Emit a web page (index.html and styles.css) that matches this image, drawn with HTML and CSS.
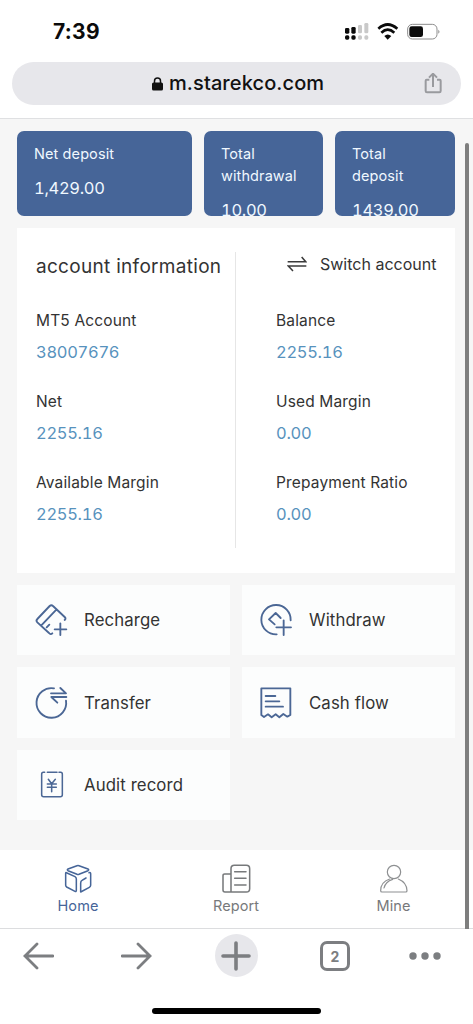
FILE: index.html
```html
<!DOCTYPE html>
<html lang="en">
<head>
<meta charset="utf-8">
<meta name="viewport" content="width=device-width, initial-scale=1">
<title>Account</title>
<link rel="stylesheet" href="styles.css">
</head>
<body>
<div class="screen">
  <header class="chrome-top">
    <div class="status">
      <span class="time">7:39</span>
      <svg class="status-icons" width="98" height="20" viewBox="0 0 294 60">
        <g fill="#0b0b0b">
          <rect x="6" y="24" width="13" height="17" rx="4"/><rect x="25" y="21" width="13" height="20" rx="4"/>
          <rect x="6" y="46" width="13" height="13" rx="5"/><rect x="25" y="46" width="13" height="13" rx="5"/>
        </g>
        <g fill="#c9c9c9">
          <rect x="45" y="15" width="12" height="25" rx="4"/><rect x="64" y="9" width="12" height="31" rx="4"/>
          <rect x="45" y="46" width="12" height="13" rx="5"/><rect x="64" y="46" width="12" height="13" rx="5"/>
        </g>
        <g fill="none" stroke="#0b0b0b" stroke-width="8">
          <path d="M106 26Q134 1 163 26"/><path d="M115 38Q134 20 154 38"/>
        </g>
        <path d="M124 48Q134 39 145 48L134 59Z" fill="#0b0b0b"/>
        <rect x="194" y="13" width="88" height="44" rx="14" fill="#fff" stroke="#8d8d8d" stroke-width="3"/>
        <rect x="199" y="19" width="41" height="32" rx="7" fill="#0b0b0b"/>
        <path d="M286 29Q293 35 286 41Z" fill="#8d8d8d"/>
      </svg>
    </div>
    <div class="address">
      <svg class="lock" width="11" height="14" viewBox="0 0 11 14"><rect x="0" y="5.4" width="11" height="8.1" rx="1.6"/><path d="M2.5 6.5V4a3 3 0 0 1 6 0v2.5" fill="none" stroke="#111" stroke-width="1.5"/></svg>
      <span class="url">m.starekco.com</span>
      <svg class="share" width="18" height="22" viewBox="0 0 54 66"><g fill="none" stroke="#999a9e" stroke-width="6" stroke-linejoin="round"><path d="M16 20H8Q5 20 5 23V54Q5 58 9 58H46Q50 58 50 54V23Q50 20 47 20H39M27 42V3M15 14L27 2L39 14"/></g></svg>
    </div>
  </header>

  <main class="content">
    <section class="totals">
      <div class="total"><p class="total-label">Net deposit</p><p class="total-value">1,429.00</p></div>
      <div class="total"><p class="total-label">Total withdrawal</p><p class="total-value">10.00</p></div>
      <div class="total"><p class="total-label">Total deposit</p><p class="total-value">1439.00</p></div>
    </section>

    <section class="account">
      <div class="account-col">
        <h1 class="account-title">account information</h1>
        <dl class="facts">
          <dt>MT5 Account</dt><dd>38007676</dd>
          <dt>Net</dt><dd>2255.16</dd>
          <dt>Available Margin</dt><dd>2255.16</dd>
        </dl>
      </div>
      <div class="account-col account-right">
        <div class="switch">
          <svg width="20" height="18" viewBox="0 0 60 54"><path d="M2 20H56L44 6M58 33H4L18 48" fill="none" stroke="#3b3b3b" stroke-width="4.5"/></svg>
          <span>Switch account</span>
        </div>
        <dl class="facts">
          <dt>Balance</dt><dd>2255.16</dd>
          <dt>Used Margin</dt><dd>0.00</dd>
          <dt>Prepayment Ratio</dt><dd>0.00</dd>
        </dl>
      </div>
    </section>

    <nav class="actions">
      <div class="action">
        <svg class="action-icon" viewBox="0 0 102 102"><path d="M55 91Q50 96 45 90L10 58Q5 53 10 48L47 9Q52 4 57 9L92 42Q97 47 92 51M67 20L22 67M38 73L46 65M79 61V96M62 79H97"/></svg>
        <span>Recharge</span>
      </div>
      <div class="action">
        <svg class="action-icon" viewBox="0 0 102 102"><path d="M95 52A44 44 0 1 0 53 94M47 64L30 49L50 30L65 45M74 52V96M52 73H96"/></svg>
        <span>Withdraw</span>
      </div>
      <div class="action">
        <svg class="action-icon" viewBox="0 0 102 102"><path d="M60 7A44.5 44.5 0 1 0 96 44M51 22H96L79 6M97 33H52L70 50"/></svg>
        <span>Transfer</span>
      </div>
      <div class="action">
        <svg class="action-icon" viewBox="0 0 102 102"><path d="M7 7H94V87L85 92L73 84L61 94L50 85L38 94L27 85L15 93L7 87ZM20 30H49M20 46H61M20 62H72"/></svg>
        <span>Cash flow</span>
      </div>
      <div class="action">
        <svg class="action-icon thin" viewBox="0 0 102 102"><path d="M32 13H28Q23 13 23 19V80Q23 86 29 86H79Q85 86 85 80V19Q85 13 80 13H75M40 13H69M43 34L53 47L64 34M53 47V71M40 48H67M40 58H67"/></svg>
        <span>Audit record</span>
      </div>
    </nav>
  </main>

  <nav class="tabs">
    <div class="tab tab-on">
      <svg class="tab-icon" viewBox="0 0 90 90"><path d="M42 5Q45 4 48 5L75 15Q79 17 75 20L48 31Q45 32 42 31L15 20Q11 17 15 15ZM8 28Q8 24 12 27L36 38Q40 40 40 45V79Q40 84 36 82L11 69Q8 67 8 64ZM53 84L79 70Q83 68 83 64V29Q83 24 78 26M53 84V58Q53 51 57 49L69 42"/></svg>
      <span>Home</span>
    </div>
    <div class="tab">
      <svg class="tab-icon" viewBox="0 0 90 90"><path d="M30 30H11Q6 30 6 35V78Q6 84 12 84H76Q86 84 86 74V14Q86 4 76 4H40Q30 4 30 14V84M41 23H75M41 43H75M41 63H75"/></svg>
      <span>Report</span>
    </div>
    <div class="tab">
      <svg class="tab-icon light" viewBox="0 0 90 90"><circle cx="45" cy="24" r="20"/><path d="M32 45Q5 54 5 80Q5 84 9 84H80Q84 84 84 80Q83 55 58 45M15 72Q19 53 41 46"/></svg>
      <span>Mine</span>
    </div>
  </nav>
  <div class="scrollbar"></div>

  <footer class="chrome-bottom">
    <div class="tools">
      <div class="tool"><svg width="32" height="28" viewBox="0 0 32 28"><path d="M31 14H3M15 2L3 14L15 26"/></svg></div>
      <div class="tool"><svg width="32" height="28" viewBox="0 0 32 28"><path d="M1 14H29M17 2L29 14L17 26"/></svg></div>
      <div class="tool"><div class="new-tab"><svg width="30" height="30" viewBox="0 0 30 30"><path d="M2 15H28M15 2V28" stroke-width="3.6"/></svg></div></div>
      <div class="tool"><div class="tab-count">2</div></div>
      <div class="tool"><svg class="dots" width="32" height="8" viewBox="0 0 32 8"><circle cx="4" cy="4" r="3.7"/><circle cx="16" cy="4" r="3.7"/><circle cx="28" cy="4" r="3.7"/></svg></div>
    </div>
    <div class="home-bar"></div>
  </footer>
</div>
</body>
</html>
```

FILE: styles.css
```css
* { box-sizing: border-box; margin: 0; padding: 0; }

body {
  background: #fff;
  color: #333;
  font-family: Inter, "Liberation Sans", sans-serif;
}

svg { display: block; flex: none; }

.screen {
  position: relative;
  display: flex;
  flex-direction: column;
  width: 473px;
  height: 1024px;
  overflow: hidden;
}

/* Browser header */
.chrome-top {
  height: 119px;
  border-bottom: 1px solid #dfe0e2;
  padding: 20px 12px 0;
}

.status {
  display: flex;
  justify-content: space-between;
  height: 42px;
  padding: 0 20px 0 41px;
}

.time {
  color: #0b0b0b;
  font-size: 21px;
  font-weight: 700;
  line-height: 24px;
  letter-spacing: 0.3px;
}

.address {
  display: flex;
  align-items: center;
  height: 43px;
  padding: 0 19px 0 140px;
  border-radius: 22px;
  background: #e7e7eb;
  color: #111;
}

.lock { fill: #111; }

.url {
  flex: 1;
  padding-left: 6px;
  font-size: 20px;
  font-weight: 500;
  letter-spacing: 0.1px;
  line-height: 24px;
  margin-top: -2px;
  white-space: nowrap;
}

/* Page */
.content {
  flex: 1;
  padding: 12px 18px 0 17px;
  background: #f6f6f6;
}

.totals {
  display: grid;
  grid-template-columns: 175px 119px 120px;
  column-gap: 12px;
  height: 85px;
}

.total {
  overflow: hidden;
  padding: 12px 17px 0;
  border-radius: 7px;
  background: #466598;
  color: #f0f8ff;
}

.total-label { font-size: 14.5px; line-height: 22px; letter-spacing: 0.1px; }

.total-value {
  margin-top: 11px;
  font-size: 16.5px;
  line-height: 24px;
  letter-spacing: -0.3px;
  font-variant-numeric: tabular-nums;
}

.account {
  display: flex;
  height: 345px;
  margin-top: 12px;
  padding: 24px 19px 25px;
  background: #fff;
}

.account-col { width: 199px; }

.account-right {
  padding-left: 40px;
  border-left: 1px solid #e6e6e6;
}

.account-title {
  height: 52px;
  font-size: 19px;
  font-weight: 400;
  line-height: 29px;
  letter-spacing: 0.3px;
  white-space: nowrap;
}

.switch {
  display: flex;
  align-items: center;
  gap: 13px;
  height: 24px;
  margin: 0 0 28px 11px;
  font-size: 16px;
  white-space: nowrap;
}

.facts { font-size: 15.5px; letter-spacing: 0.15px; white-space: nowrap; }
.facts dt { height: 32px; line-height: 33px; }

.facts dd {
  margin-bottom: 17px;
  color: #5792bd;
  font-size: 16.5px;
  line-height: 33px;
  height: 32px;
  letter-spacing: -0.3px;
  font-variant-numeric: tabular-nums;
}

.actions {
  display: grid;
  grid-template-columns: 213px 213px;
  grid-auto-rows: 70.4px;
  gap: 12px;
  margin-top: 12px;
}

.action {
  display: flex;
  align-items: center;
  gap: 16px;
  padding-left: 17px;
  background: #fcfdfd;
  font-size: 16.8px;
  letter-spacing: 0.1px;
}

.action-icon {
  width: 34px;
  height: 34px;
  fill: none;
  stroke: #4b6795;
  stroke-width: 5.6;
  stroke-linecap: round;
  stroke-linejoin: round;
}

.action-icon.thin { stroke-width: 4.6; }

.tabs {
  display: grid;
  grid-template-columns: 156px 160px 155px;
  height: 79px;
  padding-top: 14px;
  border-bottom: 1px solid #dcdddf;
  background: #fff;
  color: #77797b;
}

.tab {
  display: flex;
  flex-direction: column;
  align-items: center;
  gap: 2px;
  font-size: 14.5px;
  line-height: 20px;
}

.tab span { letter-spacing: 0.1px; }

.tab-on { color: #466598; }

.tab-icon {
  width: 30px;
  height: 30px;
  fill: none;
  stroke: currentColor;
  stroke-width: 4.6;
  stroke-linecap: round;
  stroke-linejoin: round;
}

.tab-icon.light { stroke: #8e9092; stroke-width: 3.6; }

.scrollbar {
  position: absolute;
  top: 143px;
  right: 4px;
  width: 4px;
  height: 786px;
  border-radius: 2px 2px 0 0;
  background: #7e7e7e;
}

/* Browser toolbar */
.chrome-bottom { height: 95px; background: #fff; }

.tools {
  display: grid;
  grid-template-columns: 76px 122px 76px 122px 58px;
  height: 79px;
  padding-top: 5px;
}

.tool {
  display: flex;
  align-items: center;
  justify-content: center;
  height: 43px;
  fill: none;
  stroke: #7c7e81;
  stroke-width: 2.8;
  stroke-linecap: round;
}

.dots { fill: #7c7e81; stroke: none; }

.new-tab {
  display: flex;
  align-items: center;
  justify-content: center;
  width: 43px;
  height: 43px;
  border-radius: 50%;
  background: #e7e7eb;
}

.tab-count {
  width: 30px;
  height: 30px;
  border: 3px solid #7c7e81;
  border-radius: 7px;
  color: #7c7e81;
  font-size: 14px;
  font-weight: 700;
  line-height: 25px;
  text-align: center;
}

.home-bar {
  width: 169px;
  height: 6px;
  margin: 0 auto;
  border-radius: 3px;
  background: #000;
}
```
